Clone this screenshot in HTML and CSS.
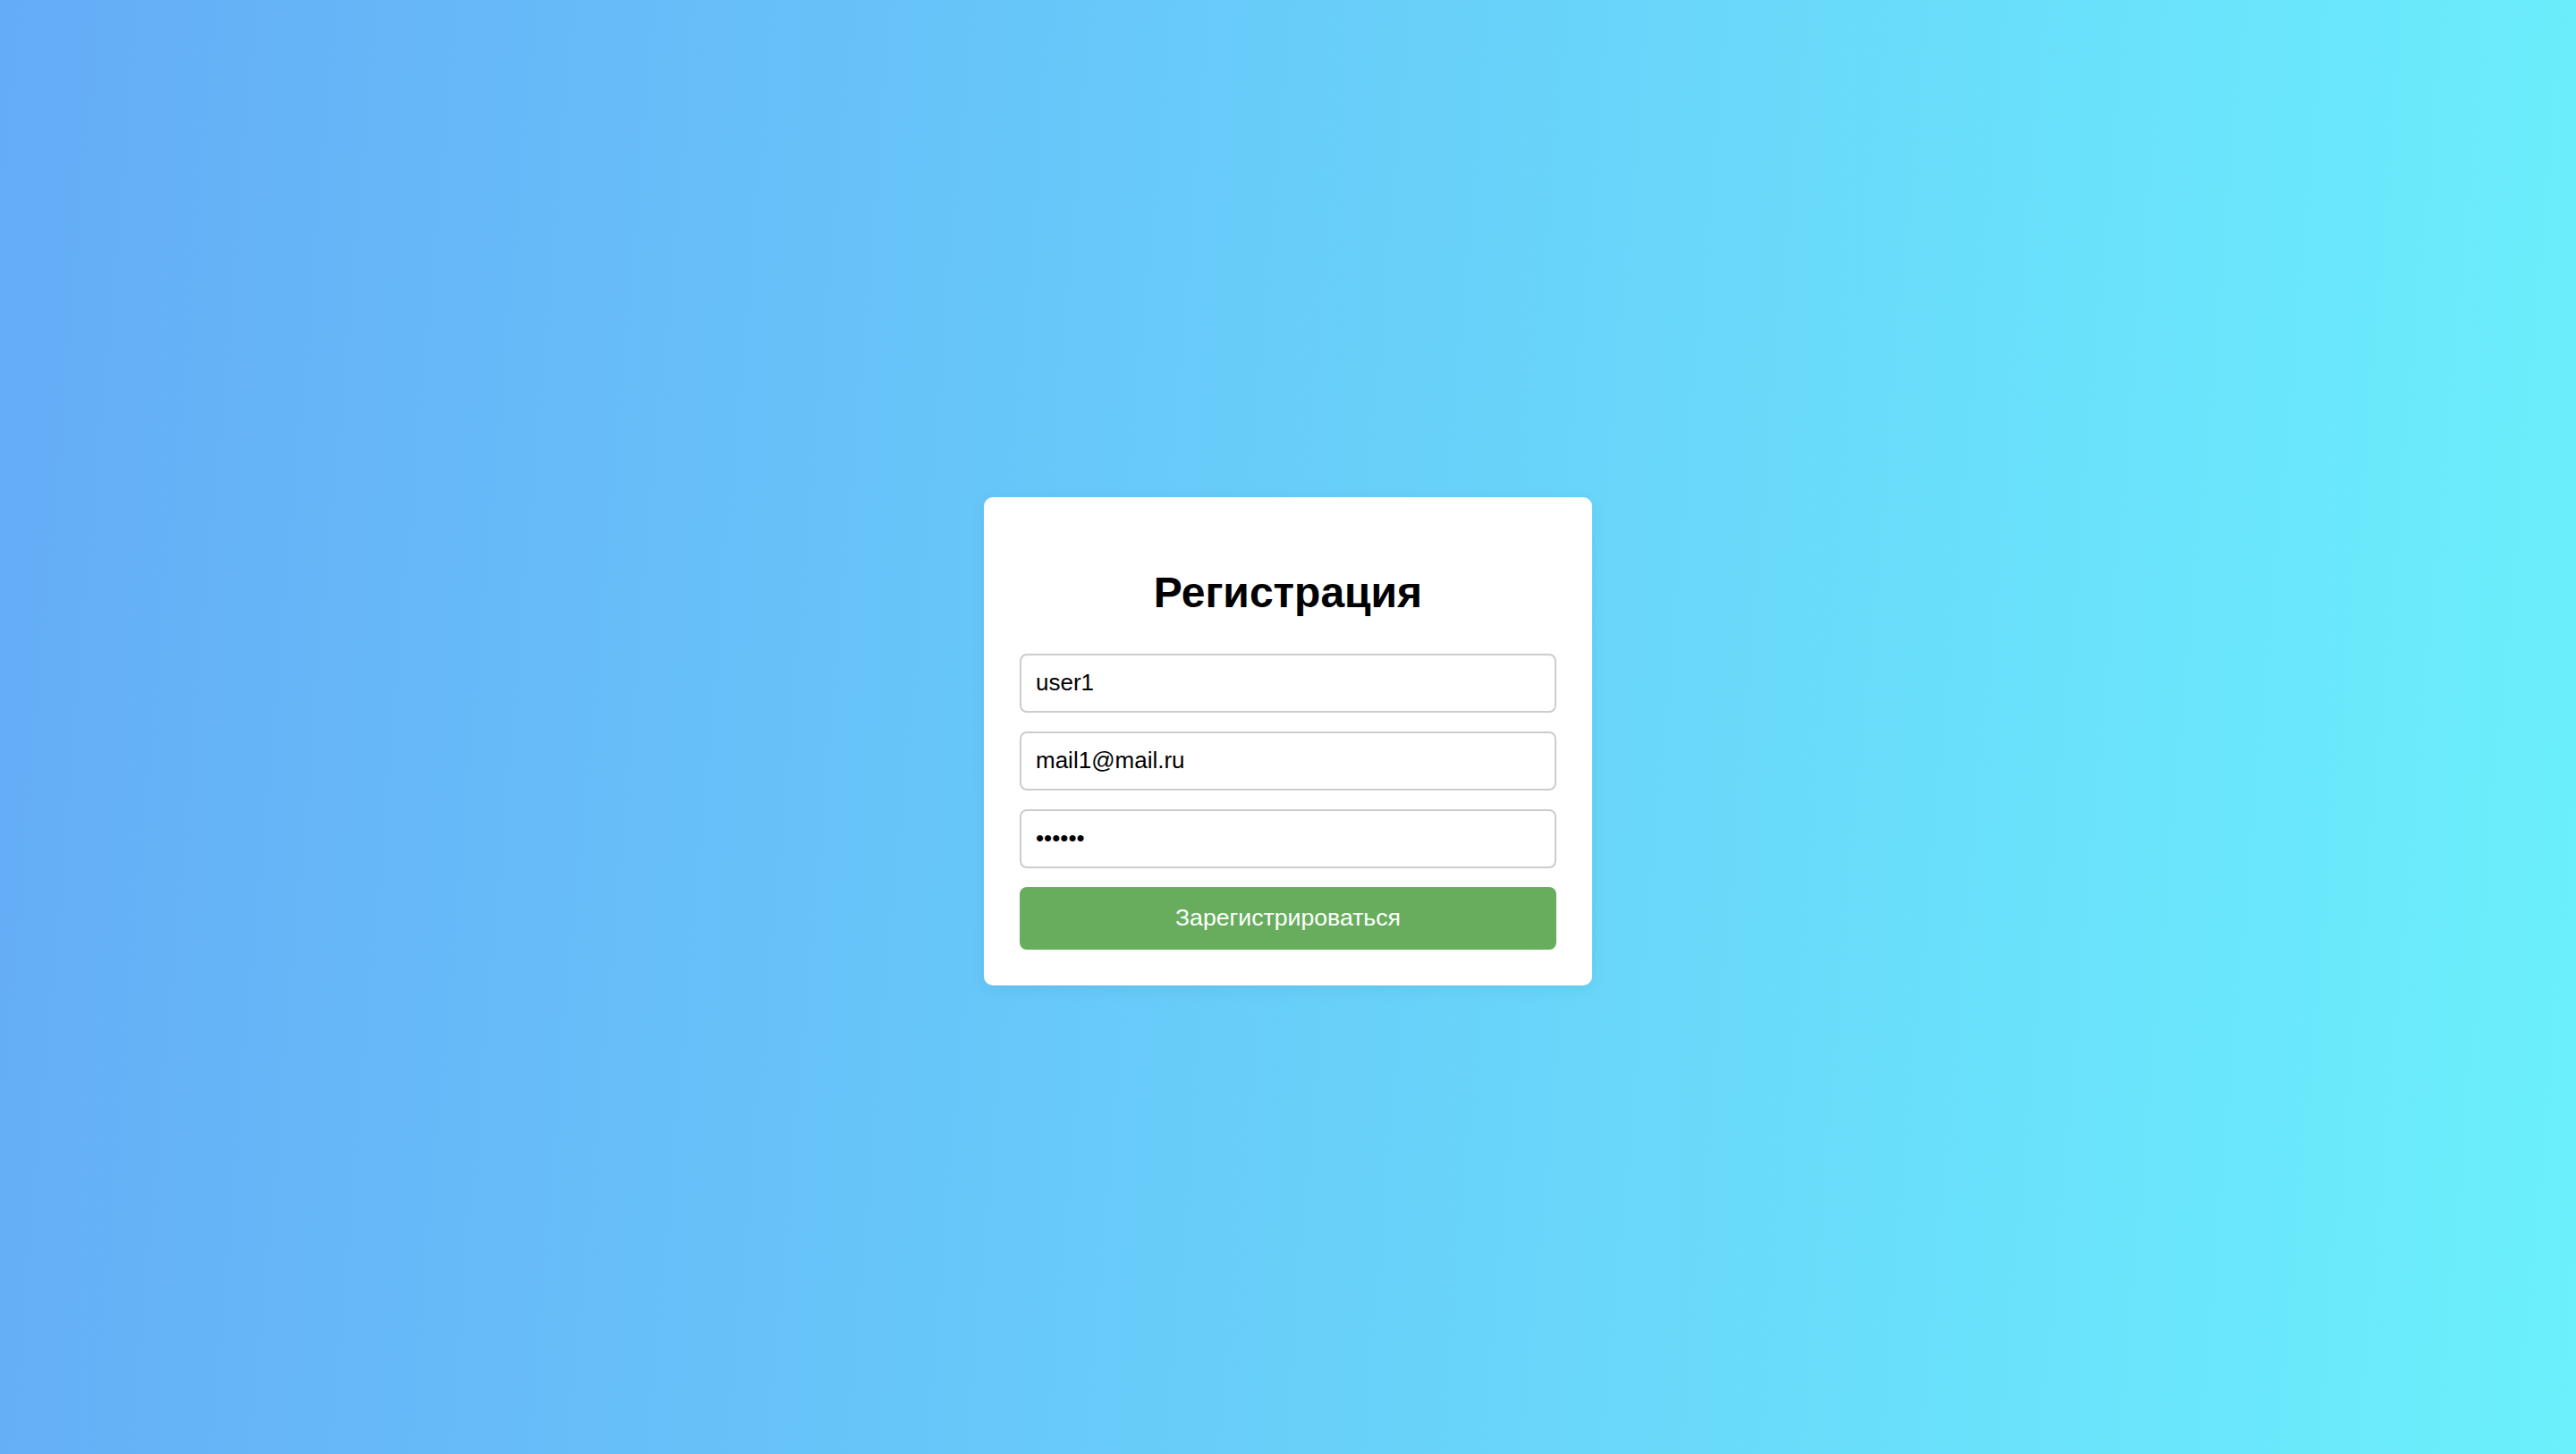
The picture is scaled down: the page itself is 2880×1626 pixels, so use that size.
FILE: index.html
```html
<!DOCTYPE html>
<html lang="ru">
<head>
<meta charset="utf-8">
<title>Регистрация</title>
<link rel="stylesheet" href="styles.css">
</head>
<body>
  <div class="card">
    <h2 class="title">Регистрация</h2>
    <form class="form">
      <input class="field" type="text" value="user1">
      <input class="field" type="email" value="mail1@mail.ru">
      <input class="field" type="password" value="123456">
      <button class="submit" type="button">Зарегистрироваться</button>
    </form>
  </div>
</body>
</html>
```

FILE: styles.css
```css
* { box-sizing: border-box; }
html, body { margin: 0; height: 100%; }
body {
  min-height: 100vh;
  padding-top: 31px;
  display: flex;
  align-items: center;
  justify-content: center;
  background: linear-gradient(95deg, #65acf7 0%, #6bf0fc 100%);
  font-family: "Liberation Sans", Arial, sans-serif;
}
.card {
  width: 680px;
  background: #ffffff;
  border-radius: 10px;
  padding: 40px 40px 40px;
  box-shadow: 0 4px 20px rgba(0, 0, 0, 0.06);
}
.title {
  margin: 40px 0 41px;
  font-size: 48px;
  line-height: 54px;
  font-weight: 700;
  color: #000;
  text-align: center;
}
.form {
  display: flex;
  flex-direction: column;
  gap: 21px;
}
.field {
  width: 100%;
  height: 66px;
  padding: 0 16px;
  border: 2px solid #cccccc;
  border-radius: 8px;
  font-family: "Liberation Sans", Arial, sans-serif;
  font-size: 26px;
  color: #000;
  background: #fff;
  outline: none;
}
.submit {
  width: 100%;
  height: 70px;
  border: none;
  border-radius: 8px;
  background: #68ad5e;
  color: #ffffff;
  font-family: "Liberation Sans", Arial, sans-serif;
  font-size: 26.67px;
  cursor: pointer;
}
```
